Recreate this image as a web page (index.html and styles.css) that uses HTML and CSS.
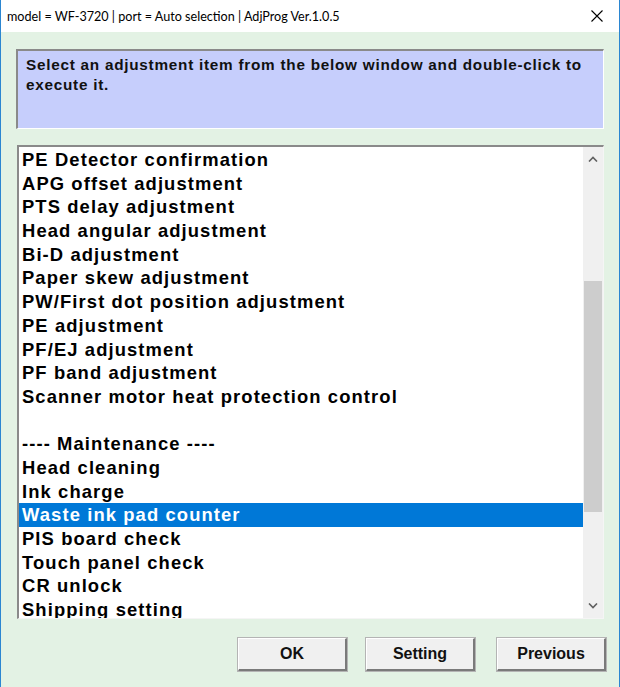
FILE: index.html
```html
<!DOCTYPE html>
<html lang="en">
<head>
  <meta charset="UTF-8" />
  <title>AdjProg</title>
  <link rel="stylesheet" href="styles.css">
</head>
<body>
  <div class="window">
    <div class="titlebar">
      <span class="title">model = WF-3720 | port = Auto selection | AdjProg Ver.1.0.5</span>
      <span class="close">
        <svg width="12" height="12" viewBox="0 0 12 12"><path d="M0.5 0.5 L11.5 11.5 M11.5 0.5 L0.5 11.5" stroke="#000" stroke-width="1.1" fill="none"/></svg>
      </span>
    </div>

    <div class="client">
      <div class="message">Select an adjustment item from the below window and double-click to execute it.</div>

      <div class="listbox">
        <ul class="items">
          <li>PE Detector confirmation</li>
          <li>APG offset adjustment</li>
          <li>PTS delay adjustment</li>
          <li>Head angular adjustment</li>
          <li>Bi-D adjustment</li>
          <li>Paper skew adjustment</li>
          <li>PW/First dot position adjustment</li>
          <li>PE adjustment</li>
          <li>PF/EJ adjustment</li>
          <li>PF band adjustment</li>
          <li>Scanner motor heat protection control</li>
          <li>&nbsp;</li>
          <li>---- Maintenance ----</li>
          <li>Head cleaning</li>
          <li>Ink charge</li>
          <li class="selected">Waste ink pad counter</li>
          <li>PIS board check</li>
          <li>Touch panel check</li>
          <li>CR unlock</li>
          <li>Shipping setting</li>
        </ul>
        <div class="scrollbar">
          <div class="arrow">
            <svg width="10" height="6" viewBox="0 0 10 6"><path d="M1 5.5 L5 1.5 L9 5.5" stroke="#606060" stroke-width="1.6" fill="none"/></svg>
          </div>
          <div class="track">
            <div class="thumb"></div>
          </div>
          <div class="arrow">
            <svg width="10" height="6" viewBox="0 0 10 6"><path d="M1 0.5 L5 4.5 L9 0.5" stroke="#606060" stroke-width="1.6" fill="none"/></svg>
          </div>
        </div>
      </div>

      <div class="buttons">
        <button class="btn">OK</button>
        <button class="btn">Setting</button>
        <button class="btn btn-last">Previous</button>
      </div>
    </div>
  </div>
</body>
</html>
```

FILE: styles.css
```css
* {
  margin: 0;
  padding: 0;
  box-sizing: border-box;
}

html, body {
  width: 620px;
  height: 687px;
  overflow: hidden;
}

body {
  font-family: 'Liberation Sans', Arial, sans-serif;
  background: #e3f2e4;
}

.window {
  width: 620px;
  height: 687px;
  display: flex;
  flex-direction: column;
  border-left: 1px solid #2b86d1;
  border-right: 1px solid #2b86d1;
}

/* Title bar */
.titlebar {
  height: 32px;
  background: #ffffff;
  display: flex;
  align-items: center;
  justify-content: space-between;
  padding-left: 6px;
}

.title {
  font-family: 'Lato', 'Noto Sans', sans-serif;
  font-size: 12.6px;
  color: #000;
}

.close {
  width: 44px;
  height: 32px;
  display: flex;
  align-items: center;
  justify-content: center;
}

/* Client area */
.client {
  flex: 1;
  display: flex;
  flex-direction: column;
  padding: 17px 15px 0 15px;
}

.message {
  height: 80px;
  background: #c6cefc;
  border-top: 2px solid #8a8a8a;
  border-left: 2px solid #8a8a8a;
  border-bottom: 1px solid #ffffff;
  border-right: 1px solid #ffffff;
  padding: 4px 10px 0 8px;
  font-weight: bold;
  font-size: 15.3px;
  line-height: 20px;
  letter-spacing: 0.75px;
  color: #111;
}

/* List */
.listbox {
  margin-top: 16px;
  margin-left: 1px;
  height: 474px;
  background: #ffffff;
  border-top: 2px solid #8a8a8a;
  border-left: 2px solid #8a8a8a;
  border-bottom: 1px solid #f5f5f5;
  border-right: 1px solid #f5f5f5;
  display: flex;
  overflow: hidden;
}

.items {
  list-style: none;
  flex: 1;
  padding-top: 1px;
  overflow: hidden;
}

.items li {
  height: 23.7px;
  line-height: 23.7px;
  padding-left: 3px;
  font-weight: bold;
  font-size: 18.4px;
  letter-spacing: 1.1px;
  color: #000;
  white-space: nowrap;
}

.items li.selected {
  background: #0078d7;
  color: #ffffff;
}

.scrollbar {
  width: 20px;
  background: #f0f0f0;
  display: flex;
  flex-direction: column;
}

.arrow {
  height: 24px;
  display: flex;
  align-items: center;
  justify-content: center;
}

.track {
  flex: 1;
  padding: 110px 1px 0 1px;
}

.thumb {
  height: 231px;
  background: #cdcdcd;
}

/* Buttons */
.buttons {
  display: flex;
  justify-content: flex-end;
  gap: 19px;
  margin-top: 19px;
  margin-right: -2px;
}

.btn {
  width: 109px;
  height: 33px;
  background: #f0f0f0;
  border-top: 1px solid #ffffff;
  border-left: 1px solid #ffffff;
  border-right: 2px solid #7a7a7a;
  border-bottom: 2px solid #7a7a7a;
  box-shadow: 0 0 0 1px #b4b4b4;
  font-family: 'Liberation Sans', Arial, sans-serif;
  font-weight: bold;
  font-size: 16px;
  color: #111;
}

.btn-last {
  margin-left: 3px;
}
```
